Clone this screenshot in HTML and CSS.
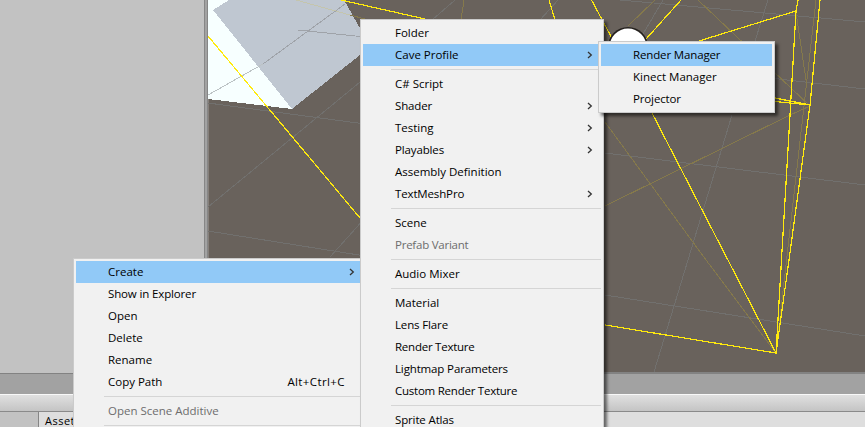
FILE: index.html
```
<!DOCTYPE html>
<html lang="en">
<head>
<meta charset="utf-8">
<title>Editor</title>
<link rel="stylesheet" href="styles.css">
</head>
<body>
<div class="editor">
  <div class="upper">
    <div class="hierarchy"></div>
    <div class="splitter"></div>
    <svg class="scene" width="657" height="372" viewBox="208 0 657 372" shape-rendering="crispEdges" fill="none">
      <path fill="#86807b" d="M208 99h1v273h-1z"/>
      <path fill="#f7ffff" d="M208 0H229L213 10L292 109L208 99Z"/>
      <path fill="#bfc7d1" d="M213 10L229 0H344L365 37V51L292 109Z"/>
      <g stroke="#71706e">
        <path d="M208 103L365 124M208 231L365 256M208 207L365 78M330 257L365 218M605 153L865 185M605 295L865 336M620 0L865 22M770 78L865 89M663 0L643 34M768 0L755 41M732 115L654 372M455 0L432 20M558 0L540 20"/>
      </g>
      <g stroke="#9fa3a9"><path d="M298 30L365 37M263 64L345 4"/></g>
      <path stroke="#bcc3c5" d="M208 95L263 64"/>
      <path stroke="#c4c5ad" d="M296 0L350 15"/>
      <g stroke="#85794b">
        <path d="M350 15L365 19M605 206L790 115L810 106M605 122L706 260L776 353M698 0L810 106M655 0L628 26M796 12L807 87M816 0L803 115L776 353M464 0L461 20"/>
      </g>
      <g stroke="#ffea0d" stroke-width="1.2">
        <path d="M208 36L370 230M341 0L425 19M549 0L555 20M591.5 0L652 113L776 353L605 325M681 0L646 39M699 41L796 11L798 0M796 11L790 115L776 353L789 260L810 105L820 0M770 97L810 105L770 101"/>
      </g>
      <circle cx="628" cy="47" r="20" fill="#25211e" shape-rendering="auto"/>
      <circle cx="628" cy="47" r="18.5" fill="#fff" shape-rendering="auto"/>
    </svg>
  </div>
  <div class="divider"></div>
  <div class="toolbar"></div>
  <div class="project"><div class="tree"></div><div class="assets">Assets</div></div>
</div>

<ul class="menu menu-context">
  <li class="item active"><span>Create</span><svg class="arrow" viewBox="0 0 6 8"><path d="M1 1L4.3 4L1 7"/></svg></li>
  <li class="item snug"><span>Show in Explorer</span></li>
  <li class="item"><span>Open</span></li>
  <li class="item"><span>Delete</span></li>
  <li class="item"><span>Rename</span></li>
  <li class="item"><span>Copy Path</span><span class="keys">Alt+Ctrl+C</span></li>
  <li class="rule"></li>
  <li class="item disabled"><span>Open Scene Additive</span></li>
  <li class="rule"></li>
</ul>

<ul class="menu menu-create">
  <li class="item"><span>Folder</span></li>
  <li class="item active"><span>Cave Profile</span><svg class="arrow" viewBox="0 0 6 8"><path d="M1 1L4.3 4L1 7"/></svg></li>
  <li class="rule"></li>
  <li class="item"><span>C# Script</span></li>
  <li class="item snug"><span>Shader</span><svg class="arrow" viewBox="0 0 6 8"><path d="M1 1L4.3 4L1 7"/></svg></li>
  <li class="item"><span>Testing</span><svg class="arrow" viewBox="0 0 6 8"><path d="M1 1L4.3 4L1 7"/></svg></li>
  <li class="item snug"><span>Playables</span><svg class="arrow" viewBox="0 0 6 8"><path d="M1 1L4.3 4L1 7"/></svg></li>
  <li class="item"><span>Assembly Definition</span></li>
  <li class="item snug"><span>TextMeshPro</span><svg class="arrow" viewBox="0 0 6 8"><path d="M1 1L4.3 4L1 7"/></svg></li>
  <li class="rule"></li>
  <li class="item"><span>Scene</span></li>
  <li class="item disabled tight"><span>Prefab Variant</span></li>
  <li class="rule"></li>
  <li class="item"><span>Audio Mixer</span></li>
  <li class="rule"></li>
  <li class="item"><span>Material</span></li>
  <li class="item snug"><span>Lens Flare</span></li>
  <li class="item tight"><span>Render Texture</span></li>
  <li class="item snug"><span>Lightmap Parameters</span></li>
  <li class="item tight"><span>Custom Render Texture</span></li>
  <li class="rule"></li>
  <li class="item snug"><span>Sprite Atlas</span></li>
</ul>

<ul class="menu menu-profile">
  <li class="item active snug"><span>Render Manager</span></li>
  <li class="item"><span>Kinect Manager</span></li>
  <li class="item snug"><span>Projector</span></li>
</ul>
</body>
</html>
```
FILE: styles.css
```
* { box-sizing: border-box; }
body {
  margin: 0;
  width: 865px;
  height: 427px;
  overflow: hidden;
  position: relative;
  font: 11.5px/22px "Open Sans", "Noto Sans", sans-serif;
  color: #000;
}
.editor { display: flex; flex-direction: column; height: 427px; overflow: hidden; }
.upper { display: flex; flex: none; height: 372px; }
.hierarchy { position: relative; width: 204px; height: 373px; background: #c2c2c2; }
.splitter { width: 4px; background: #a2a2a2; border-left: 1px solid #868686; border-right: 1px solid #868686; }
.scene { display: block; background: #69625c; }
.divider { flex: none; height: 22px; background: #a2a2a2; border-top: 2px solid #828282; }
.toolbar { flex: none; height: 18px; background: linear-gradient(#e0e0e0, #c4c4c4); border-top: 1px solid #f8f8f8; border-bottom: 1px solid #8a8a8a; }
.project { display: flex; flex: none; height: 15px; }
.tree { width: 39px; background: #c2c2c2; border-right: 1px solid #858585; }
.assets { flex: 1; background: #dedede; padding-left: 6px; line-height: 18px; font-size: 11px; letter-spacing: .5px; }
.menu {
  position: absolute;
  margin: 0;
  padding: 2px;
  list-style: none;
  background: #f1f1f1;
  border: 1px solid #cbcbcb;
  box-shadow: 3px 3px 3px rgba(0, 0, 0, .55);
  overflow: hidden;
}
.menu-context { left: 73px; top: 258px; width: 293px; height: 169px; border-bottom: 0; }
.menu-create { left: 360px; top: 19px; width: 244px; height: 408px; border-bottom: 0; }
.menu-profile { left: 598px; top: 41px; width: 177px; height: 72px; }
.item {
  display: flex;
  align-items: center;
  justify-content: space-between;
  height: 22px;
  padding: 0 8px 0 32px;
  white-space: nowrap;
}
.snug { letter-spacing: -.14px; }
.tight { letter-spacing: -.24px; }
.active { background: #91c9f7; }
.disabled { color: #6d6d6d; }
.rule { height: 7px; margin-left: 28px; padding-top: 3px; }
.rule::before { content: ""; display: block; height: 1px; background: #d5d5d5; }
.arrow { width: 6px; height: 8px; fill: none; stroke: #333; stroke-width: 1.3; }
.keys { margin-right: 10px; letter-spacing: .4px; }
```
